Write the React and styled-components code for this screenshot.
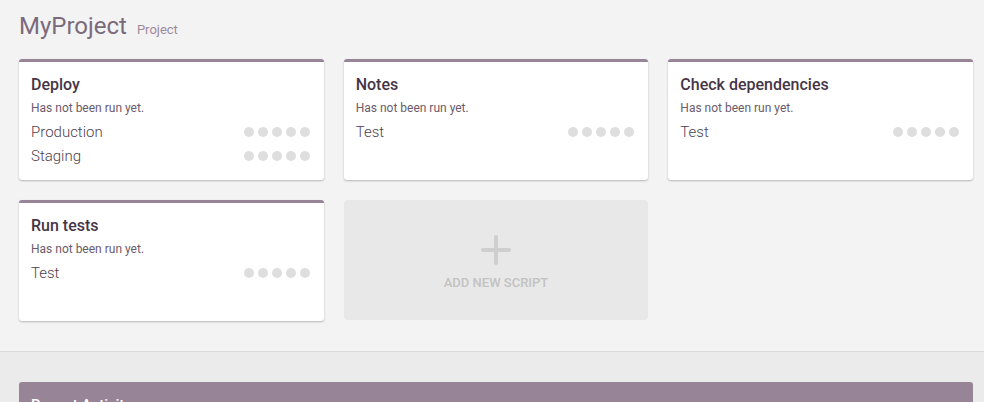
import React from "react";
import styled, { createGlobalStyle } from "styled-components";

const GlobalStyle = createGlobalStyle`
  body {
    margin: 0;
    background: #f3f3f3;
    font-family: Roboto, "Liberation Sans", sans-serif;
  }
`;

const scripts = [
  { name: "Deploy", envs: ["Production", "Staging"] },
  { name: "Notes", envs: ["Test"] },
  { name: "Check dependencies", envs: ["Test"] },
  { name: "Run tests", envs: ["Test"] },
];

const App = () => {
  return (
    <>
      <GlobalStyle />
      <Top>
        <Header>
          <ProjectName>MyProject</ProjectName>
          <ProjectType>Project</ProjectType>
        </Header>
        <Grid>
          {scripts.map((script) => (
            <Card key={script.name}>
              <CardTitle>{script.name}</CardTitle>
              <CardStatus>Has not been run yet.</CardStatus>
              <EnvList>
                {script.envs.map((env) => (
                  <EnvRow key={env}>
                    <EnvName>{env}</EnvName>
                    <Dots>
                      {[0, 1, 2, 3, 4].map((i) => (
                        <Dot key={i} />
                      ))}
                    </Dots>
                  </EnvRow>
                ))}
              </EnvList>
            </Card>
          ))}
          <AddCard>
            <svg width="30" height="30" viewBox="0 0 30 30">
              <path
                d="M15 2v26M2 15h26"
                stroke="#cfcfcf"
                strokeWidth="4"
                strokeLinecap="round"
              />
            </svg>
            <AddLabel>ADD NEW SCRIPT</AddLabel>
          </AddCard>
        </Grid>
      </Top>
      <Bottom>
        <Panel>
          <PanelTitle>Recent Activity</PanelTitle>
        </Panel>
      </Bottom>
    </>
  );
};

const Top = styled.div`
  padding: 12px 11px 30px 19px;
`;

const Header = styled.div`
  display: flex;
  align-items: baseline;
  gap: 10px;
  margin-bottom: 19px;
`;

const ProjectName = styled.h1`
  margin: 0;
  font-size: 24px;
  line-height: 28px;
  font-weight: 400;
  color: #7b6a7b;
`;

const ProjectType = styled.span`
  font-size: 13px;
  color: #9b8a9b;
`;

const Grid = styled.div`
  display: grid;
  grid-template-columns: repeat(3, 1fr);
  gap: 20px;
`;

const Card = styled.div`
  box-sizing: border-box;
  height: 121px;
  background: #fff;
  border-top: 3px solid #978497;
  border-radius: 3px;
  box-shadow: 0 1px 2px rgba(0, 0, 0, 0.25);
  padding: 12px 14px 12px 12px;
`;

const CardTitle = styled.div`
  font-size: 16px;
  line-height: 22px;
  font-weight: 500;
  color: #463546;
  margin-bottom: 4px;
`;

const CardStatus = styled.div`
  font-size: 12px;
  line-height: 16px;
  color: #6b5b6b;
  margin-bottom: 4px;
`;

const EnvList = styled.div`
  display: flex;
  flex-direction: column;
`;

const EnvRow = styled.div`
  display: flex;
  align-items: center;
  justify-content: space-between;
  height: 24px;
`;

const EnvName = styled.span`
  font-size: 15px;
  font-weight: 300;
  color: #4f3f4f;
`;

const Dots = styled.div`
  display: flex;
  gap: 4px;
`;

const Dot = styled.span`
  width: 10px;
  height: 10px;
  border-radius: 50%;
  background: #dedede;
`;

const AddCard = styled.div`
  height: 120px;
  background: #e8e8e8;
  border-radius: 4px;
  display: flex;
  flex-direction: column;
  align-items: center;
  justify-content: center;
  gap: 10px;
  padding-top: 5px;
  box-sizing: border-box;
`;

const AddLabel = styled.div`
  font-size: 13px;
  font-weight: 500;
  color: #c2c2c2;
`;

const Bottom = styled.div`
  border-top: 1px solid #dcdcdc;
  background: #ebebeb;
  padding: 30px 11px 0 19px;
  min-height: 60px;
`;

const Panel = styled.div`
  background: #978497;
  border-radius: 3px 3px 0 0;
  padding: 14px 12px;
`;

const PanelTitle = styled.div`
  color: #fff;
  font-size: 15px;
  font-weight: 500;
`;

export default App;
